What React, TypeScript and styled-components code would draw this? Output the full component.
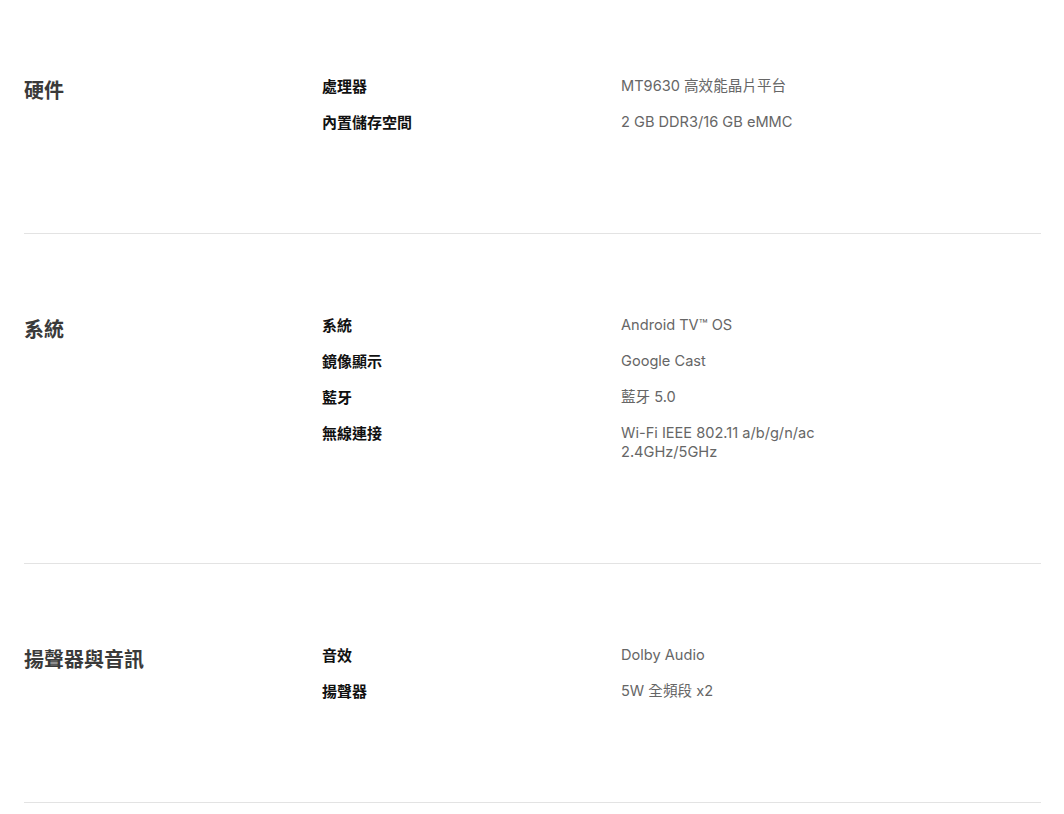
import React from "react";
import styled, { createGlobalStyle } from "styled-components";

const GlobalStyle = createGlobalStyle`
    body {
        margin: 0;
        background: #fff;
        font-family: Inter, "Noto Sans CJK TC", sans-serif;
    }
`;

const Page = styled.div`
    padding: 0 23px 0 24px;
`;

const Section = styled.section`
    display: grid;
    grid-template-columns: 298px 299px 1fr;
    padding: 82px 0 101px;
    border-bottom: 1px solid #e3e3e3;

    &:first-child {
        padding-top: 77px;
    }
`;

const Title = styled.h2`
    margin: 0;
    font-size: 20px;
    line-height: 28px;
    font-weight: 700;
    color: #3a3a3a;
`;

const SpecList = styled.dl`
    grid-column: 2 / 4;
    display: grid;
    grid-template-columns: 299px 1fr;
    row-gap: 17px;
    margin: 0;
`;

const Label = styled.dt`
    font-size: 15px;
    line-height: 19px;
    font-weight: 700;
    color: #111;
`;

const Value = styled.dd`
    margin: 0;
    font-size: 14.6px;
    line-height: 19px;
    color: #666;
`;

type Spec = { label: string; value: string[] };

const sections: { title: string; specs: Spec[] }[] = [
    {
        title: "硬件",
        specs: [
            { label: "處理器", value: ["MT9630 高效能晶片平台"] },
            { label: "內置儲存空間", value: ["2 GB DDR3/16 GB eMMC"] },
        ],
    },
    {
        title: "系統",
        specs: [
            { label: "系統", value: ["Android TV™ OS"] },
            { label: "鏡像顯示", value: ["Google Cast"] },
            { label: "藍牙", value: ["藍牙 5.0"] },
            { label: "無線連接", value: ["Wi-Fi IEEE 802.11 a/b/g/n/ac", "2.4GHz/5GHz"] },
        ],
    },
    {
        title: "揚聲器與音訊",
        specs: [
            { label: "音效", value: ["Dolby Audio"] },
            { label: "揚聲器", value: ["5W 全頻段 x2"] },
        ],
    },
];

const App = () => {
    return (
        <>
            <GlobalStyle />
            <Page>
                {sections.map((section) => (
                    <Section key={section.title}>
                        <Title>{section.title}</Title>
                        <SpecList>
                            {section.specs.map((spec) => (
                                <React.Fragment key={spec.label}>
                                    <Label>{spec.label}</Label>
                                    <Value>
                                        {spec.value.map((line, i) => (
                                            <div key={i}>{line}</div>
                                        ))}
                                    </Value>
                                </React.Fragment>
                            ))}
                        </SpecList>
                    </Section>
                ))}
            </Page>
        </>
    );
};

export default App;
